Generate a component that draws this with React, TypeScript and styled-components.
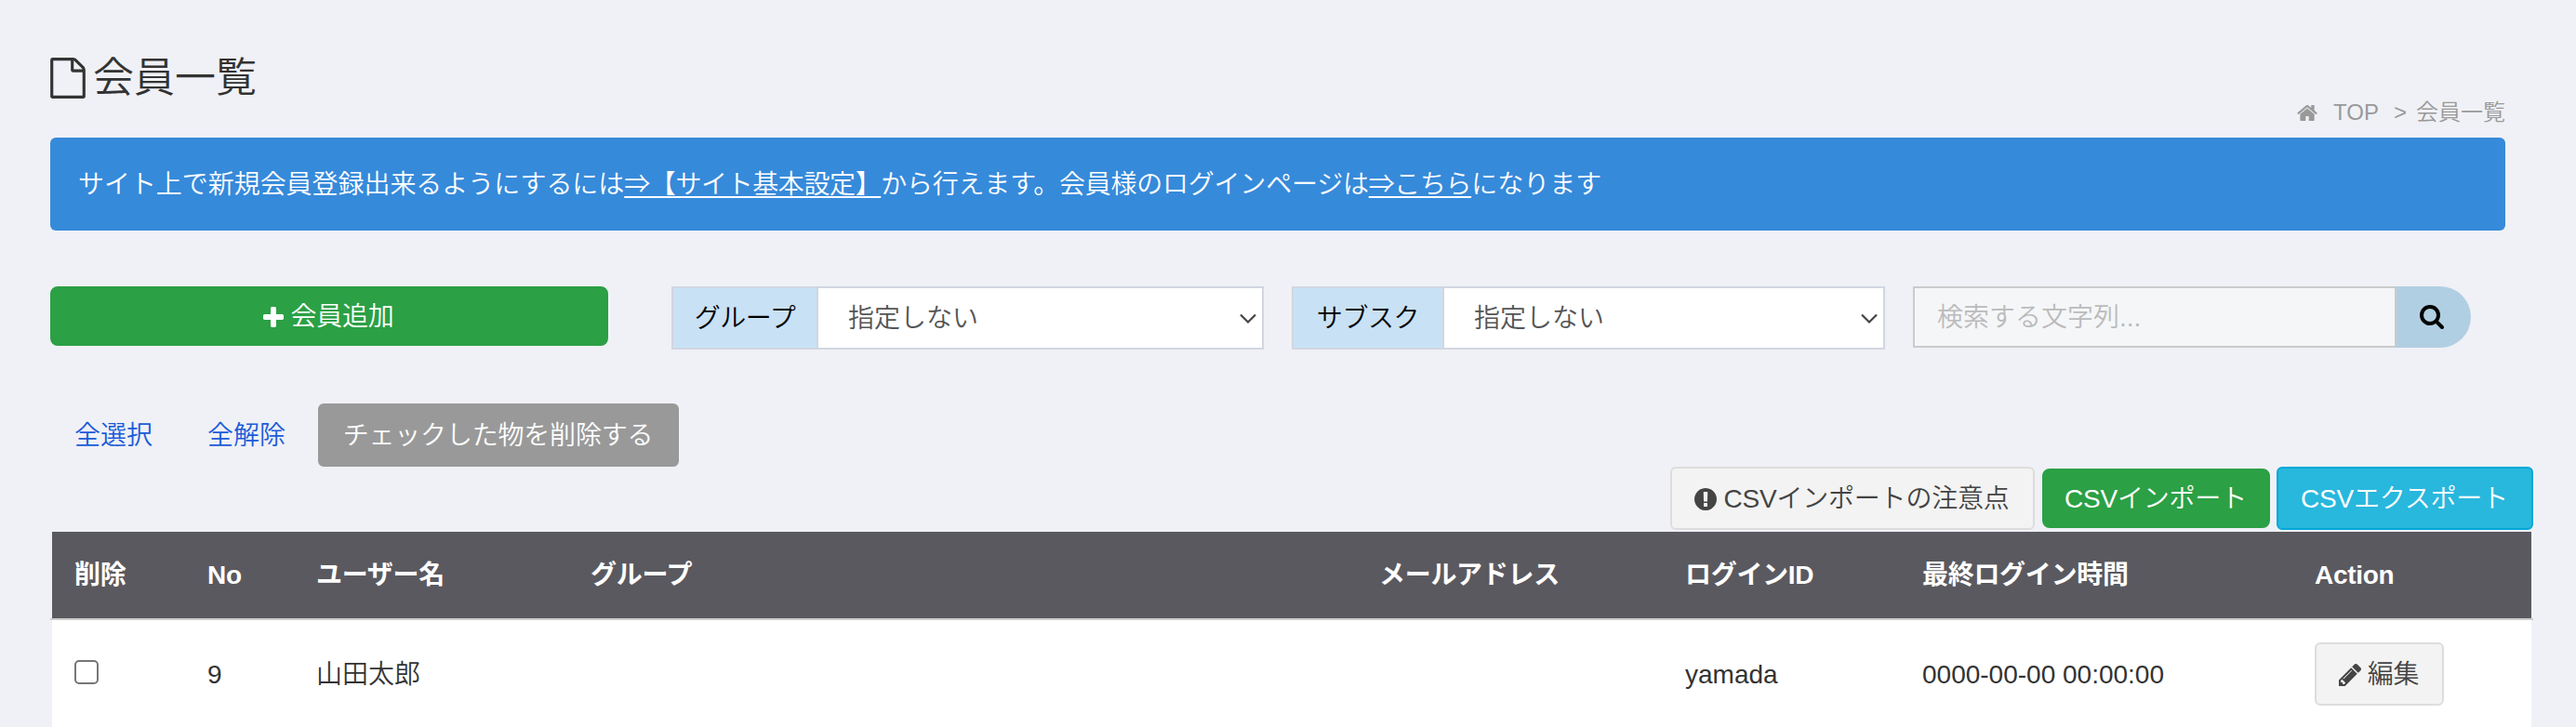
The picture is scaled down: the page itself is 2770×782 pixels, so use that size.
import React from 'react';
import styled, { createGlobalStyle } from 'styled-components';

const GlobalStyle = createGlobalStyle`
  * { box-sizing: border-box; }
  body {
    margin: 0;
    background: #f0f1f6;
    color: #333;
    font-family: "Liberation Sans", "Noto Sans CJK JP", sans-serif;
    font-size: 28px;
    font-weight: 350;
    line-height: 40px;
  }
  button, input { font: inherit; }
`;

const icons = {
  file: {
    box: '128 0 1536 1792',
    d: 'M1596 380q28 28 48 76t20 88v1152q0 40-28 68t-68 28h-1344q-40 0-68-28t-28-68v-1600q0-40 28-68t68-28h896q40 0 88 20t76 48zm-444-244v376h376q-10-29-22-41l-313-313q-12-12-41-22zm384 1528v-1024h-416q-40 0-68-28t-28-68v-416h-768v1536h1280z',
  },
  home: {
    box: '89 253 1614 1283',
    d: 'M1472 992v480q0 26-19 45t-45 19h-384v-384h-256v384h-384q-26 0-45-19t-19-45v-480q0-1 .5-3t.5-3l575-474 575 474q1 2 1 6zm223-69l-62 74q-8 9-21 11h-3q-13 0-21-7l-692-577-692 577q-12 8-24 7-13-2-21-11l-62-74q-8-10-7-23.5t11-21.5l719-599q32-26 76-26t76 26l244 204v-195q0-14 9-23t23-9h192q14 0 23 9t9 23v408l219 182q10 8 11 21.5t-7 23.5z',
  },
  plus: {
    box: '192 128 1408 1408',
    d: 'M1600 736v192q0 40-28 68t-68 28h-416v416q0 40-28 68t-68 28h-192q-40 0-68-28t-28-68v-416h-416q-40 0-68-28t-28-68v-192q0-40 28-68t68-28h416v-416q0-40 28-68t68-28h192q40 0 68 28t28 68v416h416q40 0 68 28t28 68z',
  },
  search: {
    box: '64 128 1664 1664',
    d: 'M1216 832q0-185-131.5-316.5t-316.5-131.5-316.5 131.5-131.5 316.5 131.5 316.5 316.5 131.5 316.5-131.5 131.5-316.5zm512 832q0 52-38 90t-90 38q-54 0-90-38l-343-342q-179 124-399 124-143 0-273.5-55.5t-225-150-150-225-55.5-273.5 55.5-273.5 150-225 225-150 273.5-55.5 273.5 55.5 225 150 150 225 55.5 273.5q0 220-124 399l343 343q37 37 37 90z',
  },
  pencil: {
    box: '128 149 1515 1515',
    d: 'M491 1536l91-91-235-235-91 91v107h128v128h107zm523-928q0-22-22-22-10 0-17 7l-542 542q-7 7-7 17 0 22 22 22 10 0 17-7l542-542q7-7 7-17zm-54-192l416 416-832 832h-416v-416zm683 96q0 53-37 90l-166 166-416-416 166-165q36-38 90-38 53 0 91 38l235 234q37 39 37 91z',
  },
  alert: {
    box: '128 128 1536 1536',
    d: 'M896 128q209 0 385.5 103t279.5 279.5 103 385.5-103 385.5-279.5 279.5-385.5 103-385.5-103-279.5-279.5-103-385.5 103-385.5 279.5-279.5 385.5-103zm128 1247v-190q0-14-9-23.5t-22-9.5h-192q-13 0-23 10t-10 23v190q0 13 10 23t23 10h192q13 0 22-9.5t9-23.5zm-2-344l18-621q0-12-10-18-10-8-24-8h-220q-14 0-24 8-10 6-10 18l17 621q0 10 10 17.5t24 7.5h185q14 0 23.5-7.5t10.5-17.5z',
  },
};

const Svg = styled.svg`
  display: block;
  flex: none;
  fill: currentColor;
`;

function Icon({ name, w, h }: { name: keyof typeof icons; w: number; h: number }) {
  return (
    <Svg width={w} height={h} viewBox={icons[name].box} aria-hidden="true">
      <path d={icons[name].d} />
    </Svg>
  );
}

const Page = styled.main`
  width: 2770px;
  height: 782px;
  overflow: hidden;
  padding: 0 46px 0 54px;
`;

const Header = styled.header`
  display: flex;
  justify-content: space-between;
  height: 148px;
  padding-right: 30px;
`;

const Title = styled.h1`
  display: flex;
  align-items: center;
  gap: 8px;
  height: 60px;
  margin: 54px 0 0;
  font-size: 44px;
  line-height: 60px;
  font-weight: 350;
`;

const Crumbs = styled.nav`
  display: flex;
  align-items: center;
  height: 36px;
  margin-top: 103px;
  font-size: 24px;
  line-height: 36px;
  color: #999;
`;

const CrumbTop = styled.span`
  margin: 0 16px 0 17px;
`;

const CrumbCurrent = styled.span`
  margin-left: 10px;
`;

const Notice = styled.div`
  display: flex;
  align-items: center;
  width: 2640px;
  height: 100px;
  padding: 2px 0 0 30px;
  border-radius: 6px;
  background: #368ada;
  color: #fff;
  white-space: nowrap;
`;

const NoticeText = styled.span<{ $tracking?: number }>`
  letter-spacing: ${(p) => p.$tracking ?? 0}px;
`;

const NoticeLink = styled.a`
  color: inherit;
  letter-spacing: -0.4px;
  text-decoration: underline;
  text-decoration-thickness: 2px;
  text-underline-offset: 3px;
  text-decoration-skip-ink: none;
`;

const Filters = styled.div`
  display: flex;
  align-items: flex-start;
  margin-top: 60px;
`;

const tones = {
  green: { bg: '#2ba045', edge: '#2ba045', ink: '#fff' },
  gray: { bg: '#999', edge: '#999', ink: '#fff' },
  light: { bg: '#f3f3f3', edge: '#ddd', ink: '#444' },
  cyan: { bg: '#28b7dd', edge: '#00a9d9', ink: '#fff' },
};

const Button = styled.button<{ $tone: keyof typeof tones; $w: number; $h?: number }>`
  display: flex;
  flex: none;
  align-items: center;
  justify-content: center;
  gap: 7px;
  width: ${(p) => p.$w}px;
  height: ${(p) => p.$h ?? 68}px;
  padding: 1px 1px 0 0;
  border: 2px solid ${(p) => tones[p.$tone].edge};
  border-radius: ${(p) => (p.$tone === 'green' ? 8 : 6)}px;
  background: ${(p) => tones[p.$tone].bg};
  color: ${(p) => tones[p.$tone].ink};
  letter-spacing: -0.2px;
  white-space: nowrap;
`;

const FilterBox = styled.div<{ $w: number; $ml: number }>`
  display: flex;
  width: ${(p) => p.$w}px;
  height: 68px;
  margin-left: ${(p) => p.$ml}px;
  border: 2px solid #d1d6e0;
`;

const FilterLabel = styled.span<{ $w: number }>`
  display: flex;
  align-items: center;
  justify-content: center;
  width: ${(p) => p.$w}px;
  padding-top: 2px;
  border-right: 2px solid #d1d6e0;
  background: #c9e1f5;
  color: #000;
  letter-spacing: -0.4px;
`;

const FilterValue = styled.div`
  display: flex;
  flex: 1;
  align-items: center;
  justify-content: space-between;
  padding: 2px 6px 0 32px;
  background: #fff;
  color: #555;
`;

const Chevron = styled.svg`
  display: block;
  fill: none;
  stroke: #444;
  stroke-width: 2.2;
`;

const SearchField = styled.input`
  width: 520px;
  height: 66px;
  margin-left: 30px;
  padding: 1px 24px 0;
  border: 2px solid #c9cbcc;
  border-radius: 0;
  background: #f5f6f8;
  outline: none;
  &::placeholder { color: #bbb; opacity: 1; }
`;

const SearchButton = styled.button`
  display: flex;
  align-items: center;
  width: 80px;
  height: 66px;
  padding: 0 0 0 25px;
  border: 0;
  border-radius: 0 33px 33px 0;
  background: #b1cfe2;
  color: #000;
`;

const BulkBar = styled.div`
  display: flex;
  align-items: center;
  height: 68px;
  margin-top: 58px;
  padding-left: 26px;
`;

const BulkLink = styled.a<{ $w: number }>`
  width: ${(p) => p.$w}px;
  padding-top: 2px;
  color: #1a5cd8;
`;

const CsvBar = styled.div`
  display: flex;
  align-items: center;
  justify-content: flex-end;
  height: 68px;
  margin-bottom: 2px;
`;

const Spacer = styled.span<{ $w: number }>`
  width: ${(p) => p.$w}px;
`;

const Table = styled.div`
  width: 2670px;
`;

const Row = styled.div<{ $head?: boolean }>`
  display: grid;
  grid-template-columns: 143px 117px 295px 848px 329px 255px 422px 1fr;
  align-items: center;
  height: ${(p) => (p.$head ? 93 : 116)}px;
  margin: 0 2px;
  padding-left: 24px;
  background: ${(p) => (p.$head ? '#5a595f' : '#fff')};
  color: ${(p) => (p.$head ? '#fff' : '#333')};
  font-weight: ${(p) => (p.$head ? 700 : 350)};
`;

const HeadCell = styled.span`
  letter-spacing: -0.3px;
`;

const Cell = styled.span`
  padding-top: 2px;
`;

const Rule = styled.div`
  height: 2px;
  background: #ccc;
`;

const Checkbox = styled.input`
  appearance: none;
  display: block;
  width: 26px;
  height: 26px;
  margin: -4px 0 0;
  border: 2px solid #767676;
  border-radius: 5px;
  background: #fff;
`;

const headings = ['削除', 'No', 'ユーザー名', 'グループ', 'メールアドレス', 'ログインID', '最終ログイン時間', 'Action'];

function Filter({ label, labelWidth, width, offset }: { label: string; labelWidth: number; width: number; offset: number }) {
  return (
    <FilterBox $w={width} $ml={offset}>
      <FilterLabel $w={labelWidth}>{label}</FilterLabel>
      <FilterValue>
        指定しない
        <Chevron width="18" height="12" viewBox="0 0 18 12">
          <path d="M1 1.5L9 9.5L17 1.5" />
        </Chevron>
      </FilterValue>
    </FilterBox>
  );
}

export default function App() {
  return (
    <Page>
      <GlobalStyle />
      <Header>
        <Title>
          <Icon name="file" w={38} h={44} />
          会員一覧
        </Title>
        <Crumbs>
          <Icon name="home" w={22} h={17} />
          <CrumbTop>TOP</CrumbTop>
          &gt;
          <CrumbCurrent>会員一覧</CrumbCurrent>
        </Crumbs>
      </Header>

      <Notice>
        <NoticeText $tracking={-0.05}>サイト上で新規会員登録出来るようにするには</NoticeText>
        <NoticeLink>⇒【サイト基本設定】</NoticeLink>
        <NoticeText $tracking={-0.22}>から行えます。会員様のログインページは</NoticeText>
        <NoticeLink>⇒こちら</NoticeLink>
        <NoticeText>になります</NoticeText>
      </Notice>

      <Filters>
        <Button $tone="green" $w={600} $h={64}>
          <Icon name="plus" w={22} h={22} />
          会員追加
        </Button>
        <Filter label="グループ" labelWidth={156} width={637} offset={68} />
        <Filter label="サブスク" labelWidth={162} width={638} offset={30} />
        <SearchField placeholder="検索する文字列..." />
        <SearchButton aria-label="検索">
          <Icon name="search" w={26} h={26} />
        </SearchButton>
      </Filters>

      <BulkBar>
        <BulkLink $w={143}>全選択</BulkLink>
        <BulkLink $w={119}>全解除</BulkLink>
        <Button $tone="gray" $w={388}>チェックした物を削除する</Button>
      </BulkBar>

      <CsvBar>
        <Button $tone="light" $w={392}>
          <Icon name="alert" w={24} h={24} />
          CSVインポートの注意点
        </Button>
        <Spacer $w={8} />
        <Button $tone="green" $w={245} $h={64}>CSVインポート</Button>
        <Spacer $w={7} />
        <Button $tone="cyan" $w={276}>CSVエクスポート</Button>
      </CsvBar>

      <Table>
        <Row $head>
          {headings.map((h) => (
            <HeadCell key={h}>{h}</HeadCell>
          ))}
        </Row>
        <Rule />
        <Row>
          <Checkbox type="checkbox" />
          <Cell>9</Cell>
          <Cell>山田太郎</Cell>
          <Cell />
          <Cell />
          <Cell>yamada</Cell>
          <Cell>0000-00-00 00:00:00</Cell>
          <Button $tone="light" $w={139}>
            <Icon name="pencil" w={24} h={24} />
            編集
          </Button>
        </Row>
      </Table>
    </Page>
  );
}
